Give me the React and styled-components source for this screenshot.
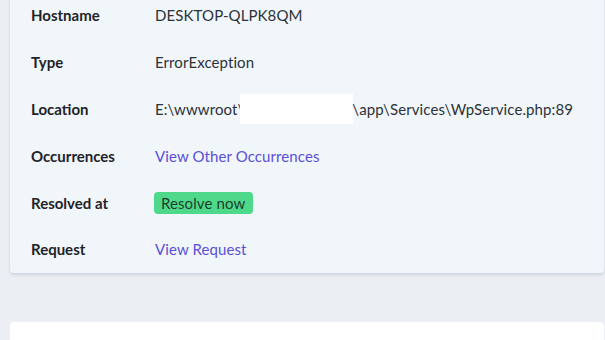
import React from 'react';
import styled, { createGlobalStyle } from 'styled-components';

const GlobalStyle = createGlobalStyle`
  html, body {
    margin: 0;
    padding: 0;
    background: #ebeef2;
    font-family: Lato, "Open Sans", sans-serif;
    font-size: 15px;
    color: #212529;
    overflow: hidden;
  }
`;

const Page = styled.div`
  padding: 0 1px 0 10px;
`;

const Card = styled.div`
  background: #f1f6fb;
  border-radius: 0 0 4px 4px;
  box-shadow: 0 2px 3px rgba(150, 170, 190, 0.35);
  margin-top: -8px;
`;

const Table = styled.div`
  display: grid;
  grid-template-columns: 124px 1fr;
  grid-auto-rows: 46.8px;
  align-items: center;
  padding-left: 21px;
`;

const Label = styled.div`
  font-weight: 700;
  color: #1f2328;
`;

const Value = styled.div`
  color: #2d3238;
  white-space: nowrap;
  display: flex;
  align-items: center;
  letter-spacing: 0.1px;
`;

const Redacted = styled.span`
  display: inline-block;
  width: 113px;
  height: 30px;
  background: #fff;
  margin: 0 -1px 0 -4px;
`;

const Link = styled.a`
  color: #5b4fd8;
  text-decoration: none;
  cursor: pointer;
`;

const Badge = styled.button`
  font: inherit;
  letter-spacing: 0.1px;
  border: none;
  background: #4ed98a;
  color: #1e3d2c;
  border-radius: 4px;
  padding: 0 8px 0 7px;
  height: 22px;
  line-height: 22px;
  margin-left: -1px;
  cursor: pointer;
`;

const Panel = styled.div`
  background: #fff;
  border-radius: 4px 4px 0 0;
  margin-top: 49px;
  padding: 14px 21px 0;
`;

const Tabs = styled.div`
  display: flex;
  gap: 30px;
`;

const Tab = styled.a`
  color: ${p => (p.active ? '#5b4fd8' : '#2d3238')};
  text-decoration: none;
`;

const rows = [
  ['Hostname', 'DESKTOP-QLPK8QM'],
  ['Type', 'ErrorException'],
];

export default function App() {
  return (
    <>
      <GlobalStyle />
      <Page>
        <Card>
          <Table>
            {rows.map(([k, v]) => (
              <React.Fragment key={k}>
                <Label>{k}</Label>
                <Value>{v}</Value>
              </React.Fragment>
            ))}
            <Label>Location</Label>
            <Value>
              E:\wwwroot\<Redacted />\app\Services\WpService.php:89
            </Value>
            <Label>Occurrences</Label>
            <Value><Link>View Other Occurrences</Link></Value>
            <Label>Resolved at</Label>
            <Value><Badge>Resolve now</Badge></Value>
            <Label>Request</Label>
            <Value><Link>View Request</Link></Value>
          </Table>
        </Card>
        <Panel>
          <Tabs>
            <Tab active>Message</Tab>
            <Tab>Location</Tab>
            <Tab>Stacktrace</Tab>
            <Tab>Data</Tab>
          </Tabs>
        </Panel>
      </Page>
    </>
  );
}
